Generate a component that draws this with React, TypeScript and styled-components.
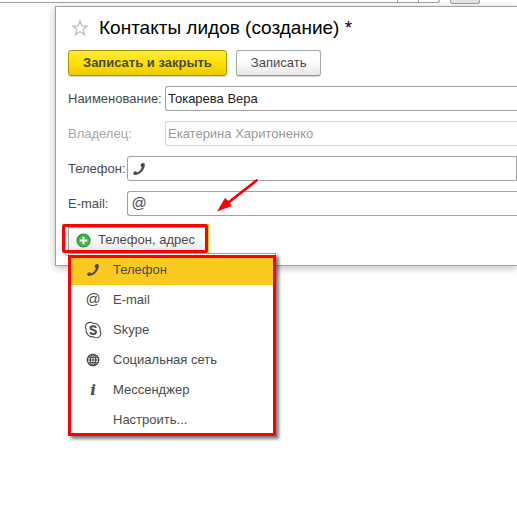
import React from "react";
import styled, { createGlobalStyle, css } from "styled-components";

const Global = createGlobalStyle`
  * { box-sizing: border-box; }
  html, body { margin: 0; background: #fff; }
  body, button, input { font-family: "Liberation Sans", Arial, sans-serif; font-size: 13px; line-height: 16px; color: #4a4a4a; }
`;

const Page = styled.div`
  position: relative;
  min-height: 100vh;
  overflow: hidden;
`;

const ParentBar = styled.div`
  display: flex;
  align-items: flex-start;
  height: 6px;
`;

const ParentSearch = styled.div`
  display: flex;
  justify-content: flex-end;
  width: 440px;
  height: 3px;
  border-bottom: 1px solid #a0a0a0;
  border-right: 1px solid #a0a0a0;
  border-bottom-right-radius: 3px;
`;

const ParentSearchButton = styled.div`
  width: 21px;
  border-left: 1px solid #a0a0a0;
`;

const ParentButton = styled.div`
  width: 30px;
  height: 4px;
  margin-left: 10px;
  background: #e6e6e6;
  border: 1px solid #a0a0a0;
  border-top: 0;
  border-radius: 0 0 3px 3px;
`;

const Dialog = styled.main`
  position: relative;
  margin-left: 55px;
  padding: 8px 0 12px 12px;
  background: #fff;
  border: 1px solid #a0a0a0;
  border-right: 0;
  box-shadow: 0 2px 8px rgba(0, 0, 0, 0.25);
`;

const TitleRow = styled.header`
  display: flex;
  align-items: center;
  gap: 10px;
  height: 26px;
  padding-left: 3px;
`;

const StarButton = styled.button`
  display: flex;
  width: 18px;
  padding: 0;
  border: 0;
  background: none;
`;

const Title = styled.h1`
  margin: 0;
  font-size: 19px;
  line-height: 24px;
  font-weight: 400;
  color: #000;
  white-space: nowrap;
`;

const Toolbar = styled.div`
  display: flex;
  gap: 9px;
  margin-top: 9px;
`;

const Button = styled.button<{ $primary?: boolean }>`
  height: 26px;
  padding: 0 14px;
  border: 1px solid #a8a8a8;
  border-bottom-color: #959595;
  border-radius: 3px;
  background: linear-gradient(#fff 40%, #e8e8e8);
  box-shadow: 0 1px 1px rgba(0, 0, 0, 0.18);
  white-space: nowrap;
  ${(p) =>
    p.$primary &&
    css`
      border-color: #a89700;
      background: linear-gradient(#ffec3d, #ffe100 50%, #e8ca00);
      font-weight: 700;
    `}
`;

const Fields = styled.div`
  display: flex;
  flex-direction: column;
  gap: 10px;
  margin-top: 10px;
`;

const Field = styled.div<{ $disabled?: boolean }>`
  display: flex;
  align-items: center;
  color: ${(p) => (p.$disabled ? "#a6a6a6" : "#4a4a4a")};
`;

const Label = styled.label<{ $wide?: boolean }>`
  flex: none;
  width: ${(p) => (p.$wide ? 97 : 59)}px;
  white-space: nowrap;
`;

const Box = styled.div<{ $disabled?: boolean; $closed?: boolean }>`
  display: flex;
  align-items: center;
  flex: 1;
  min-width: 0;
  height: 25px;
  padding-left: 2px;
  border: 1px solid ${(p) => (p.$disabled ? "#d6d6d6" : "#a0a0a0")};
  border-right-width: ${(p) => (p.$closed ? 1 : 0)}px;
  border-radius: 3px 0 0 3px;
`;

const Input = styled.input`
  flex: 1;
  min-width: 0;
  padding: 0;
  border: 0;
  outline: 0;
  background: none;
  color: #222;
  &:disabled { color: #999; }
`;

const IconCell = styled.span`
  display: flex;
  align-items: center;
  justify-content: center;
  flex: none;
  width: 18px;
  height: 18px;
  color: #4a4a4a;
`;

const AddWrap = styled.div`
  position: relative;
  width: 138px;
  margin-top: 11px;
`;

const AddButton = styled.button`
  display: flex;
  align-items: center;
  gap: 7px;
  width: 100%;
  height: 26px;
  padding: 0 0 0 7px;
  border: 1px solid #a0a0a0;
  background: linear-gradient(#fff 40%, #e8e8e8);
  outline: 1px solid #fbca20;
  outline-offset: 2px;
  white-space: nowrap;
`;

const Highlight = styled.div`
  position: absolute;
  inset: -3px -2px 0 -6px;
  border: 3px solid #f00;
  border-radius: 2px;
  pointer-events: none;
`;

const Menu = styled.ul`
  position: absolute;
  z-index: 1;
  top: 100%;
  left: 0;
  width: 208px;
  margin: 0;
  padding: 1px 0 0;
  list-style: none;
  background: #fff;
  border: 1px solid #a0a0a0;
  box-shadow: 3px 3px 3px rgba(0, 0, 0, 0.5);
`;

const MenuHighlight = styled.div`
  position: absolute;
  inset: 1px -1px -1px -1px;
  border: 3px solid #f00;
  pointer-events: none;
`;

const MenuItem = styled.button<{ $active?: boolean }>`
  display: flex;
  align-items: center;
  gap: 11px;
  width: 100%;
  height: 30px;
  padding: 0 0 0 15px;
  border: 0;
  background: ${(p) => (p.$active ? "#fbca20" : "none")};
  text-align: left;
`;

const Arrow = styled.svg`
  position: absolute;
  left: 216px;
  top: 178px;
  pointer-events: none;
`;

const At = styled.span`
  height: 20px;
  font-size: 15px;
  line-height: 18px;
`;

const Info = styled.span`
  font: italic 700 15px/18px "DejaVu Serif", serif;
`;

const Phone = () => (
  <svg width="14" height="14" viewBox="0 0 14 14" aria-hidden="true">
    <path
      d="M9.200 1.700C10.200.9 11.900.7 12.600 1.600 14 6.300 8.500 12.800 3.500 13 2.200 13 1.200 12.300 1.200 11.200 1.200 10 3 9.100 4.300 9.400L5.100 10.500C7.300 9.900 9.400 7.400 9.900 5.100L8.900 4.500C8.500 3.600 8.600 2.200 9.200 1.700Z"
      fill="currentColor"
    />
  </svg>
);

const Skype = () => (
  <svg width="18" height="18" viewBox="0 0 18 18" aria-hidden="true" fill="none" stroke="currentColor">
    <path d="M9 2.200C7 .8 3.800 1 2.200 3.200 1.100 4.800 1.300 6.600 2 8 1.600 12.600 5 16.200 9.600 15.900 12 17.400 14.800 16.900 16.200 14.800 17.200 13.200 17 11.500 16.100 10 16.700 5.400 13.500 2 9 2.200Z" strokeWidth="1.100" />
    <path d="M12 6.700C11.500 4.700 6.600 4.500 6.500 7 6.500 9.400 12 8.400 12 11 11.900 13.600 6.800 13.600 6.200 11.200" strokeWidth="2" />
  </svg>
);

const Globe = () => (
  <svg width="14" height="14" viewBox="0 0 14 14" aria-hidden="true" fill="none" stroke="currentColor" strokeWidth="1.300">
    <circle cx="7" cy="7" r="5.700" />
    <ellipse cx="7" cy="7" rx="2.700" ry="5.700" />
    <path d="M7 1V13M1 7H13M2 4.300H12M2 9.700H12" strokeWidth="1" />
  </svg>
);

const Plus = () => (
  <svg width="15" height="15" viewBox="0 0 15 15" aria-hidden="true">
    <circle cx="7.500" cy="7.500" r="6.500" fill="#43b649" stroke="#2c8f3b" strokeWidth="1.200" />
    <path d="M7.500 3.700V11.300M3.700 7.500H11.300" stroke="#fff" strokeWidth="2" />
  </svg>
);

const Star = () => (
  <svg width="18" height="18" viewBox="0 0 18 18" aria-hidden="true">
    <path d="M9 1.700 10.900 7H16.300L12 10.200 13.600 15.700 9 12.400 4.400 15.700 6 10.200 1.700 7H7.100Z" fill="none" stroke="#b4bac2" strokeWidth="1.200" />
  </svg>
);

const items = [
  { text: "Телефон", icon: <Phone />, active: true },
  { text: "E-mail", icon: <At>@</At> },
  { text: "Skype", icon: <Skype /> },
  { text: "Социальная сеть", icon: <Globe /> },
  { text: "Мессенджер", icon: <Info>i</Info> },
  { text: "Настроить...", icon: null },
];

export default function App() {
  return (
    <Page>
      <Global />
      <ParentBar>
        <ParentSearch>
          <ParentSearchButton />
          <ParentSearchButton />
        </ParentSearch>
        <ParentButton />
      </ParentBar>
      <Dialog>
        <TitleRow>
          <StarButton aria-label="Избранное"><Star /></StarButton>
          <Title>Контакты лидов (создание) *</Title>
        </TitleRow>
        <Toolbar>
          <Button $primary>Записать и закрыть</Button>
          <Button>Записать</Button>
        </Toolbar>
        <Fields>
          <Field>
            <Label $wide htmlFor="name">Наименование:</Label>
            <Box><Input id="name" defaultValue="Токарева Вера" /></Box>
          </Field>
          <Field $disabled>
            <Label $wide htmlFor="owner">Владелец:</Label>
            <Box $disabled><Input id="owner" disabled defaultValue="Екатерина Харитоненко" /></Box>
          </Field>
          <Field>
            <Label htmlFor="phone">Телефон:</Label>
            <Box $closed><IconCell><Phone /></IconCell><Input id="phone" type="tel" /></Box>
          </Field>
          <Field>
            <Label htmlFor="email">E-mail:</Label>
            <Box><IconCell><At>@</At></IconCell><Input id="email" type="email" /></Box>
          </Field>
        </Fields>
        <AddWrap>
          <AddButton aria-haspopup="menu" aria-expanded="true"><Plus />Телефон, адрес</AddButton>
          <Highlight />
          <Menu role="menu">
            {items.map((item) => (
              <li key={item.text} role="none">
                <MenuItem role="menuitem" $active={item.active}>
                  <IconCell>{item.icon}</IconCell>
                  {item.text}
                </MenuItem>
              </li>
            ))}
            <MenuHighlight as="li" role="none" />
          </Menu>
        </AddWrap>
      </Dialog>
      <Arrow width="44" height="36" viewBox="0 0 44 36" aria-hidden="true">
        <path d="M40.500 2.500 13 24" stroke="#f00" strokeWidth="2.800" strokeLinecap="round" />
        <path d="M1 33.500 9 20 12 22.500 16 28Z" fill="#f00" />
      </Arrow>
    </Page>
  );
}
